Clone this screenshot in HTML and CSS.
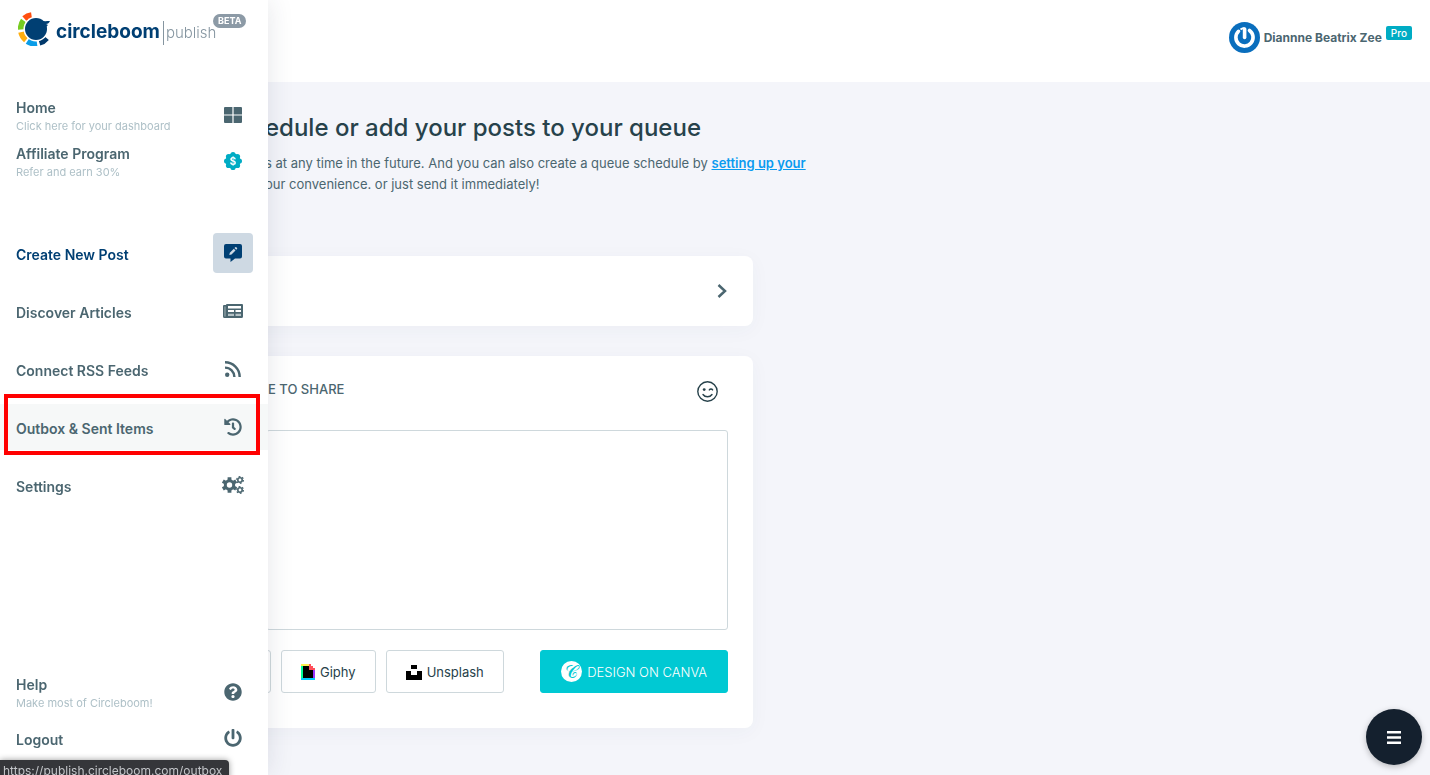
FILE: index.html
```html
<!DOCTYPE html>
<html lang="en">
  <head>
    <meta charset="UTF-8" />
    <meta name="viewport" content="width=device-width, initial-scale=1.0" />
    <title>Circleboom Publish</title>
    <link rel="stylesheet" href="styles.css">
  </head>
  <body>
    <header class="topbar">
      <svg class="avatar" viewBox="0 0 31 31">
        <circle cx="15.500" cy="15.500" r="15.500" fill="#0a6ebd" />
        <path d="M9.500 9.300A8.600 8.600 0 1 0 20.500 8.500" fill="none" stroke="#fff" stroke-width="3.600" stroke-linecap="round" />
        <path d="M15.600 7v8.500" stroke="#fff" stroke-width="3.600" stroke-linecap="round" />
        <path d="M11.500 7.500q2-1.500 4-1.500" fill="none" stroke="#fff" stroke-width="2" />
      </svg>
      <span class="user-name">Diannne Beatrix Zee</span>
      <span class="pro">Pro</span>
    </header>

    <nav class="sidebar">
      <a class="logo" href="#">
        <svg class="logo-mark" viewBox="0 0 32 34">
          <g fill="none" stroke-width="6">
            <path d="M6.300 6.500A14 14 0 0 1 13.500 3.200" stroke="#ff4f0f" />
            <path d="M2.900 17.500A14 14 0 0 1 5.500 8.500" stroke="#77cc22" />
            <path d="M8 28A14 14 0 0 1 3.200 20.200" stroke="#ffae0f" />
            <path d="M19 31.400A14 14 0 0 1 9.400 29.300" stroke="#0a9de8" />
            <path d="M28.500 26A14 14 0 0 1 21.400 30.700" stroke="#00396b" />
          </g>
          <circle cx="18" cy="17" r="12.500" fill="#fff" />
          <circle cx="18" cy="17" r="11" fill="#003f73" />
          <path d="M20 7c4 3 8 2 12 2-1 2-2 3-4 3l2 1-3 3z" fill="#003f73" />
        </svg>
        <span class="brand">circleboom</span>
        <span class="product">publish</span>
        <span class="beta">BETA</span>
      </a>

      <a class="item" href="#">
        <span class="text">Home<small>Click here for your dashboard</small></span>
        <span class="icon">
          <svg width="18" height="16" viewBox="0 0 18 16"><path d="M1 0h7.400v7.400H0V1a1 1 0 0 1 1-1zM9.600 0H17a1 1 0 0 1 1 1v6.400H9.600zM0 8.600h8.400V16H1a1 1 0 0 1-1-1zM9.600 8.600H18V15a1 1 0 0 1-1 1H9.600z" /></svg>
        </span>
      </a>
      <a class="item" href="#">
        <span class="text">Affiliate Program<small>Refer and earn 30%</small></span>
        <span class="icon">
          <svg class="badge-icon" width="18" height="18" viewBox="0 0 18 18">
            <circle cx="9" cy="9" r="7.500" />
            <circle cx="9" cy="2.600" r="2.600" /><circle cx="13.500" cy="4.500" r="2.600" />
            <circle cx="15.400" cy="9" r="2.600" /><circle cx="13.500" cy="13.500" r="2.600" />
            <circle cx="9" cy="15.400" r="2.600" /><circle cx="4.500" cy="13.500" r="2.600" />
            <circle cx="2.600" cy="9" r="2.600" /><circle cx="4.500" cy="4.500" r="2.600" />
            <text x="9" y="12.500" text-anchor="middle">$</text>
          </svg>
        </span>
      </a>

      <div class="group">
        <a class="item active" href="#">
          <span class="text">Create New Post</span>
          <span class="icon">
            <svg width="18" height="18" viewBox="0 0 18 18">
              <path d="M2 0h14a2 2 0 0 1 2 2v10.500a2 2 0 0 1-2 2h-5L6.500 18v-3.500H2a2 2 0 0 1-2-2V2a2 2 0 0 1 2-2z" />
              <path d="M5.300 11l.5-2.200 4-4 1.700 1.700-4 4zM10.500 4.100l.8-.8a.8.8 0 0 1 1.100 0l.6.600a.8.800 0 0 1 0 1.100l-.8.800z" fill="#ced9e3" />
            </svg>
          </span>
        </a>
        <a class="item" href="#">
          <span class="text">Discover Articles</span>
          <span class="icon">
            <svg width="20" height="14" viewBox="0 0 20 14">
              <path d="M4 0h15a1 1 0 0 1 1 1v11.500a1.500 1.500 0 0 1-1.500 1.500h-17A1.500 1.500 0 0 1 0 12.500V2a1 1 0 0 1 1-1h2a1 1 0 0 1 1-1z" />
              <path d="M1.300 2.500h1.400v10H1.300z" fill="#8b9da3" />
              <path d="M5 2h13v2.500H5zM5 6h6v2H5zM12.500 6H18v2h-5.500z" fill="#fff" />
              <path d="M5 9.800h6v2.200H5zM12.500 9.800H18V12h-5.500z" fill="#b5c2c6" />
            </svg>
          </span>
        </a>
        <a class="item" href="#">
          <span class="text">Connect RSS Feeds</span>
          <span class="icon">
            <svg width="16" height="16" viewBox="0 0 16 16">
              <circle cx="2.200" cy="13.800" r="2.200" />
              <path d="M0 6.600A9.400 9.400 0 0 1 9.400 16M0 1.300A14.700 14.700 0 0 1 14.700 16" fill="none" stroke="#4b6670" stroke-width="2.400" />
            </svg>
          </span>
        </a>
        <a class="item hovered" href="#">
          <span class="text">Outbox &amp; Sent Items</span>
          <span class="icon">
            <svg width="18" height="18" viewBox="0 0 512 512"><path d="M504 255.531c.253 136.640-111.180 248.372-247.820 248.468-59.015.042-113.223-20.530-155.822-54.911-11.077-8.940-11.905-25.541-1.839-35.607l11.267-11.267c8.609-8.609 22.353-9.551 31.891-1.984C173.062 425.135 212.781 440 256 440c101.705 0 184-82.311 184-184 0-101.705-82.311-184-184-184-48.814 0-93.149 18.969-126.068 49.932l50.754 50.754c10.080 10.080 2.941 27.314-11.313 27.314H24c-8.837 0-16-7.163-16-16V38.627c0-14.254 17.234-21.393 27.314-11.314l49.372 49.372C129.209 34.136 189.552 8 256 8c136.810 0 247.747 110.780 248 247.531zm-180.912 78.784l9.823-12.630c8.138-10.463 6.253-25.542-4.210-33.679L288 256.349V152c0-13.255-10.745-24-24-24h-16c-13.255 0-24 10.745-24 24v135.651l65.409 50.874c10.463 8.137 25.541 6.253 33.679-4.210z" /></svg>
          </span>
        </a>
        <a class="item" href="#">
          <span class="text">Settings</span>
          <span class="icon">
            <svg width="22" height="18" viewBox="0 0 22 18">
              <g fill="none" stroke="#4b6670">
                <circle cx="7.500" cy="9" r="4.200" stroke-width="3" />
                <path d="M7.500 1.200v3M7.500 13.800v3M.8 5.100l2.600 1.500M11.600 11.400l2.600 1.500M.8 12.900l2.600-1.500M11.600 6.600l2.600-1.500" stroke-width="3.800" />
                <circle cx="18" cy="4" r="2.200" stroke-width="1.600" />
                <circle cx="18" cy="4" r="3.400" stroke-width="1.200" stroke-dasharray="1.800 1.760" />
                <circle cx="18" cy="14" r="2.200" stroke-width="1.600" />
                <circle cx="18" cy="14" r="3.400" stroke-width="1.200" stroke-dasharray="1.800 1.760" />
              </g>
            </svg>
          </span>
        </a>
      </div>

      <div class="bottom">
        <a class="item" href="#">
          <span class="text">Help<small>Make most of Circleboom!</small></span>
          <span class="icon">
            <svg width="18" height="18" viewBox="0 0 512 512"><path d="M504 256c0 136.997-111.043 248-248 248S8 392.997 8 256C8 119.083 119.043 8 256 8s248 111.083 248 248zM262.655 90c-54.497 0-89.255 22.957-116.549 63.758-3.536 5.286-2.353 12.415 2.715 16.258l34.699 26.310c5.205 3.947 12.621 3.008 16.665-2.122 17.864-22.658 30.113-35.797 57.303-35.797 20.429 0 45.698 13.148 45.698 32.958 0 14.976-12.363 22.667-32.534 33.976C247.128 238.528 216 254.941 216 296v4c0 6.627 5.373 12 12 12h56c6.627 0 12-5.373 12-12v-1.333c0-28.462 83.186-29.647 83.186-106.667 0-58.002-60.165-102-116.531-102zM256 338c-25.365 0-46 20.635-46 46 0 25.364 20.635 46 46 46s46-20.636 46-46c0-25.365-20.635-46-46-46z" /></svg>
          </span>
        </a>
        <a class="item" href="#">
          <span class="text">Logout</span>
          <span class="icon">
            <svg width="18" height="18" viewBox="0 0 512 512"><path d="M400 54.100c63 45 104 118.600 104 201.900 0 136.800-110.800 247.700-247.500 248C120 504.300 8.200 393 8 256.400 7.900 173.100 48.900 99.300 111.800 54.200c11.700-8.300 28-4.800 35 7.700L162.600 90c5.900 10.500 3.100 23.800-6.600 31-41.500 30.800-68 79.600-68 134.900-.1 92.300 74.500 168.100 168 168.100 91.600 0 168.600-74.200 168-169.100-.3-51.800-24.700-101.800-68.100-134-9.700-7.200-12.400-20.500-6.500-30.900l15.800-28.100c7-12.400 23.200-16.100 34.800-7.800zM296 264V24c0-13.300-10.700-24-24-24h-32c-13.300 0-24 10.700-24 24v240c0 13.300 10.700 24 24 24h32c13.300 0 24-10.700 24-24z" /></svg>
          </span>
        </a>
      </div>
    </nav>

    <main>
      <div class="intro">
        <h1>edule or add your posts to your queue</h1>
        <p>s at any time in the future. And you can also create a queue schedule by <a href="#">setting up your</a><br />our convenience. or just send it immediately!</p>
      </div>

      <button type="button" class="card picker" aria-label="Choose accounts">
        <svg width="10" height="14" viewBox="0 0 10 14"><path d="M1.500 1L8 7l-6.500 6" fill="none" stroke="#4b6670" stroke-width="2.500" /></svg>
      </button>

      <form class="card composer">
        <div class="composer-head">
          <label for="post">E TO SHARE</label>
          <button type="button" class="emoji" aria-label="Emoji">
            <svg width="21" height="21" viewBox="0 0 21 21">
              <g fill="none" stroke="#27424b" stroke-width="1.400" stroke-linecap="round">
                <circle cx="10.500" cy="10.500" r="9.700" />
                <path d="M6 13.500c2.200 3 6.800 3 9 0M12.300 8.900c.8-1.200 2.600-1.200 3.300 0" />
              </g>
              <circle cx="7.200" cy="8.600" r="1.400" fill="#27424b" />
            </svg>
          </button>
        </div>
        <textarea id="post" name="post"></textarea>
        <div class="actions">
          <button type="button" class="btn media" aria-label="Media"></button>
          <button type="button" class="btn">
            <svg width="14" height="18" viewBox="0 0 14 18">
              <path d="M2 2h6v5h4v8H2z" />
              <path d="M0 2h2v14H0z" fill="#00ff99" />
              <path d="M0 1h8v2H0z" fill="#fff152" />
              <path d="M0 15h14v2H0z" fill="#00ccff" />
              <path d="M12 6h2v9h-2z" fill="#9933ff" />
              <path d="M8 1h2v2h2v2h2v2H8z" fill="#ff4f5a" />
            </svg>
            Giphy
          </button>
          <button type="button" class="btn">
            <svg width="16" height="16" viewBox="0 0 16 16"><path d="M5 1h6v4H5zM0 7h5v4h6V7h5v9H0z" /></svg>
            Unsplash
          </button>
          <button type="button" class="btn canva">
            <svg width="21" height="21" viewBox="0 0 21 21">
              <circle cx="10.500" cy="10.500" r="10.500" fill="#fff" />
              <text x="10" y="17" text-anchor="middle">&#x1D49E;</text>
            </svg>
            DESIGN ON CANVA
          </button>
        </div>
      </form>
    </main>

    <button type="button" class="fab" aria-label="Menu">
      <svg width="14" height="13" viewBox="0 0 14 13"><path d="M0 0h14v2.500H0zM0 5.200h14v2.500H0zM0 10.400h14v2.500H0z" fill="#fff" /></svg>
    </button>

    <div class="status">https://publish.circleboom.com/outbox</div>
  </body>
</html>
```
FILE: styles.css
```css
* {
  box-sizing: border-box;
}
body {
  margin: 0;
  min-height: 100vh;
  background-color: #f4f5fa;
  color: #4b6670;
  font-family: Inter, "Liberation Sans", sans-serif;
  font-size: 13px;
}
button {
  font: inherit;
  color: inherit;
  cursor: pointer;
}
svg {
  display: block;
  flex: none;
}

.topbar {
  display: flex;
  align-items: center;
  justify-content: flex-end;
  gap: 4px;
  height: 82px;
  padding: 0 18px 8px;
  background-color: #fff;
}
.avatar {
  width: 31px;
  height: 31px;
}
.user-name {
  font-size: 12px;
  font-weight: 700;
}
.pro {
  padding: 0 5px;
  margin-bottom: 9px;
  border-radius: 2px;
  background-color: #00acc4;
  color: #fff;
  font-size: 10px;
  font-weight: 500;
  line-height: 14px;
}

.sidebar {
  position: fixed;
  top: 0;
  bottom: 0;
  left: 0;
  z-index: 2;
  display: flex;
  flex-direction: column;
  width: 268px;
  padding-bottom: 14px;
  background-color: #fff;
  box-shadow: 0 0 25px rgba(40, 50, 70, 0.12);
}
.logo {
  display: flex;
  align-items: center;
  height: 64px;
  margin-bottom: 28px;
  padding: 0 0 6px 18px;
  color: #003f73;
  text-decoration: none;
}
.logo-mark {
  width: 32px;
  height: 34px;
}
.brand {
  margin: 5px 3px 0 6px;
  font-size: 19px;
  font-weight: 700;
}
.product {
  margin-top: 8px;
  padding-left: 2px;
  border-left: 1px solid #8595a0;
  color: #8595a0;
  font-size: 15px;
  font-weight: 300;
  line-height: 24px;
}
.beta {
  position: absolute;
  top: 14px;
  left: 213px;
  padding: 0 5px;
  border-radius: 7px;
  background-color: #8c9aa6;
  color: #fff;
  font-size: 9px;
  font-weight: 700;
  line-height: 14px;
}
.item {
  position: relative;
  display: flex;
  align-items: center;
  justify-content: space-between;
  height: 46px;
  padding: 0 15px 0 16px;
  color: #4b6670;
  font-size: 14px;
  font-weight: 600;
  line-height: 18px;
  text-decoration: none;
}
.text {
  padding-top: 3px;
}
.item small {
  display: block;
  color: #aec0c7;
  font-size: 11px;
  font-weight: 400;
}
.icon {
  display: flex;
  align-items: center;
  justify-content: center;
  width: 40px;
  height: 40px;
  border-radius: 4px;
}
.icon svg {
  fill: #4b6670;
}
.icon .badge-icon {
  fill: #00acc4;
}
.badge-icon text {
  fill: #fff;
  font-size: 10px;
  font-weight: 700;
}
.group {
  display: flex;
  flex-direction: column;
  gap: 12px;
  margin-top: 46px;
}
.active {
  color: #003f73;
}
.active .icon {
  background-color: #ced9e3;
}
.active .icon svg {
  fill: #003f73;
}
.hovered {
  background-color: #f6f8f8;
}
.hovered::after {
  content: "";
  position: absolute;
  top: -10px;
  right: 8px;
  bottom: -5px;
  left: 4px;
  border: 4px solid #f00;
}
.bottom {
  margin-top: auto;
}

main {
  padding: 31px 24px 47px 241px;
}
.intro {
  padding-left: 24px;
}
h1 {
  margin: 0 0 10px;
  color: #27424b;
  font-size: 24px;
  font-weight: 500;
  line-height: 30px;
}
p {
  margin: 0 0 61px;
  line-height: 21px;
}
p a {
  color: #0a9bf0;
  font-weight: 600;
}
.card {
  width: 100%;
  max-width: 512px;
  border: 0;
  border-radius: 8px;
  background-color: #fff;
  box-shadow: 0 4px 20px rgba(60, 70, 110, 0.04);
}
.picker {
  display: flex;
  align-items: center;
  justify-content: flex-end;
  height: 70px;
  margin-bottom: 30px;
  padding: 0 26px;
}
.composer {
  padding: 25px 25px 35px;
}
.composer-head {
  display: flex;
  justify-content: space-between;
  margin-bottom: 28px;
  padding: 0 10px 0 2px;
}
.composer-head label {
  font-weight: 500;
  line-height: 16px;
}
.emoji {
  padding: 0;
  border: 0;
  background: none;
}
textarea {
  display: block;
  width: 100%;
  height: 200px;
  margin-bottom: 20px;
  padding: 12px;
  border: 1px solid #ced8dc;
  border-radius: 3px;
  font: inherit;
  resize: none;
}
.actions {
  display: flex;
  gap: 10px;
}
.btn {
  display: flex;
  align-items: center;
  gap: 5px;
  height: 43px;
  padding: 0 19px;
  border: 1px solid #ced8dc;
  border-radius: 3px;
  background-color: #fff;
  color: #27424b;
  white-space: nowrap;
}
.media {
  margin-left: -35px;
}
.canva {
  margin-left: auto;
  padding: 0 20px;
  border-color: #00c9d3;
  background-color: #00c9d3;
  color: #fff;
  font-weight: 300;
}
.canva text {
  fill: #00c9d3;
  font-family: "DejaVu Serif", "Liberation Serif", serif;
  font-size: 18px;
}

.fab {
  position: fixed;
  right: 8px;
  bottom: 10px;
  display: flex;
  align-items: center;
  justify-content: center;
  width: 56px;
  height: 56px;
  border: 0;
  border-radius: 50%;
  background-color: #14202e;
  box-shadow: 0 2px 6px rgba(0, 0, 0, 0.25);
}
.status {
  position: fixed;
  bottom: -7px;
  left: 0;
  z-index: 3;
  padding: 0 7px 0 3px;
  border-radius: 0 4px 0 0;
  background-color: #35363a;
  box-shadow: 0 0 6px rgba(0, 0, 0, 0.4);
  color: #c3c5c9;
  font-size: 12px;
  line-height: 22px;
}
```
